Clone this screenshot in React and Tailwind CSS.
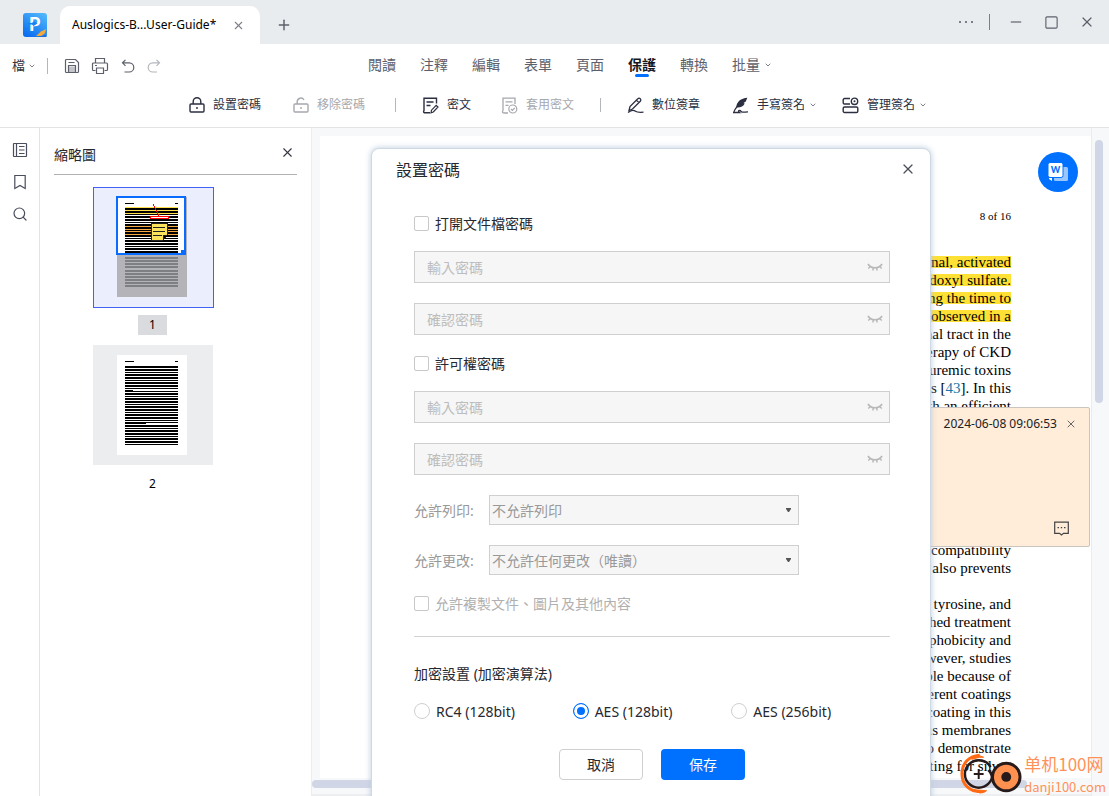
import React, { useState } from 'react'
import { ChevronDown, Minus, Plus, Search, Square, X } from 'lucide-react'

const menuItems = ['閱讀', '注釋', '編輯', '表單', '頁面', '保護', '轉換', '批量']

const printOptions = ['不允許列印', '低解析度', '高解析度']
const changeOptions = ['不允許任何更改（唯讀）', '允許註釋', '允許填寫表單']
const algorithms = ['RC4 (128bit)', 'AES (128bit)', 'AES (256bit)']

// one entry per line of the page; blank strings keep the rhythm
const paperLines = [
  { text: 'intestinal, activated', mark: true },
  { text: 'as indoxyl sulfate.', mark: true },
  { text: 'during the time to', mark: true },
  { text: 'was observed in a', mark: true },
  { text: 'intestinal tract in the' },
  { text: 'therapy of CKD' },
  { text: 'uremic toxins' },
  { text: 'toxins [43]. In this', cite: '43' },
  { text: 'with an efficient' },
  { text: '' },
  { text: '' },
  { text: '' },
  { text: '' },
  { text: '' },
  { text: '' },
  { text: '' },
  { text: 'biocompatibility' },
  { text: 'also prevents' },
  { text: '' },
  { text: 'tyrosine, and' },
  { text: 'established treatment' },
  { text: 'hydrophobicity and' },
  { text: 'However, studies' },
  { text: 'possible because of' },
  { text: 'different coatings' },
  { text: 'coating in this' },
  { text: 'dialysis membranes' },
  { text: 'to demonstrate' },
  { text: 'coating for silver' },
]

const Icon = ({ size = 16, children, className = '' }) => (
  <svg
    width={size}
    height={size}
    viewBox={`0 0 ${size} ${size}`}
    fill="none"
    stroke="currentColor"
    strokeWidth="1.2"
    className={`shrink-0 ${className}`}
    aria-hidden="true"
  >
    {children}
  </svg>
)

const SaveIcon = () => (
  <Icon size={16}>
    <path d="M5 8.500 H11 V14 H5 Z" fill="#c3c5cb" stroke="none" />
    <path d="M1.500 2.500 A1 1 0 0 1 2.500 1.500 H11.500 L14.500 4.500 V13.500 A1 1 0 0 1 13.500 14.500 H2.500 A1 1 0 0 1 1.500 13.500 Z" />
    <path d="M4.500 4.500 H10.500 M4.500 14.500 V7.500 H11.500 V14.500" />
  </Icon>
)

const PrintIcon = () => (
  <Icon size={18}>
    <path d="M4.500 6 V1.500 H13.500 V6 M4.500 13.500 H2.500 A1 1 0 0 1 1.500 12.500 V7 A1 1 0 0 1 2.500 6 H15.500 A1 1 0 0 1 16.500 7 V12.500 A1 1 0 0 1 15.500 13.500 H13.500" />
    <path d="M5.500 11 H12.500 V16.500 H5.500 Z M4 8.500 H6" />
  </Icon>
)

const UndoIcon = () => (
  <Icon size={14}>
    <path d="M4.500 0.800 L1.500 3.800 L4.500 6.800 M1.500 3.800 H8.200 A4.600 4.600 0 0 1 8.200 13 H3.500" />
  </Icon>
)

const RedoIcon = () => (
  <Icon size={14}>
    <path d="M9.500 0.800 L12.500 3.800 L9.500 6.800 M12.500 3.800 H5.800 A4.600 4.600 0 0 0 5.800 13 H10" />
  </Icon>
)

const LockIcon = ({ open }) => (
  <Icon size={16}>
    <rect x="1" y="7" width="14" height="8" rx="1" strokeWidth="1.400" />
    <path d={open ? 'M4.200 7 V4.500 A3.700 3.700 0 0 1 11 2.800' : 'M4.200 7 V4.500 A3.800 3.800 0 0 1 11.800 4.500 V7'} strokeWidth="1.400" />
    <path d="M8 10 V12" strokeWidth="1.400" />
  </Icon>
)

const RedactIcon = () => (
  <Icon size={17}>
    <path d="M8 15.800 H3.500 C1.800 15.800 1 15 2 13.500 V1.200 H14.500 V6.500" strokeWidth="1.400" />
    <path d="M4.500 5 H11.500 M4.500 8.500 H8.500" strokeWidth="1.300" />
    <path d="M9 15.800 L9.500 13.200 L14.200 8.300 L16 10 L11.300 15 Z" strokeWidth="1.200" />
  </Icon>
)

const ApplyIcon = () => (
  <Icon size={17}>
    <path d="M7 16 H3 C1.500 16 1 15 2 13.500 V1.200 H14 V7" strokeWidth="1.300" />
    <path d="M4.500 4.800 H11.500 M4.500 8.300 H7.500" />
    <circle cx="11.800" cy="12" r="4" />
    <path d="M10 12 L11.400 13.400 L13.800 10.800" />
  </Icon>
)

const PenIcon = () => (
  <Icon size={17}>
    <path d="M2 13.500 L3 9.500 L10.800 1.800 A1.300 1.300 0 0 1 13.300 4.200 L5.500 12 Z M9.500 3.200 L12 5.600" strokeWidth="1.300" />
    <path d="M1 15.500 C5 12.500 7 13 8.500 14.300 S12 15.500 16.500 15.200" strokeWidth="1.300" />
  </Icon>
)

const FeatherIcon = () => (
  <Icon size={17}>
    <path d="M15.300 0.800 C9 1.500 4.500 4.500 4.300 10.500 C8.500 10.800 11.500 9.500 12.700 6.500 L11.500 6 L13.800 4.500 Z" fill="currentColor" stroke="none" />
    <path d="M2 15 C2.500 12.500 4 10.500 8 6.500" strokeWidth="1.200" />
    <path d="M1 15.500 H7.500 C5 13.800 8 12.800 9 14.300 C10 15.800 12 15.400 16 14.800" strokeWidth="1.300" />
  </Icon>
)

const ManageIcon = () => (
  <Icon size={17}>
    <path d="M8 1.500 H2.500 A1.300 1.300 0 0 0 1.200 2.800 V5.700 A1.300 1.300 0 0 0 2.500 7 H8" strokeWidth="1.400" />
    <rect x="1.200" y="10" width="14.600" height="5.500" rx="1.300" strokeWidth="1.400" />
    <circle cx="12.500" cy="4.300" r="3.200" strokeWidth="1.400" />
    <circle cx="12.500" cy="4.300" r="1" fill="currentColor" stroke="none" />
  </Icon>
)

const ClosedEyeIcon = () => (
  <Icon size={16} className="text-[#b8b8b8]">
    <path d="M1 5 C4 10 12 10 15 5" strokeWidth="1.700" />
    <path d="M3.500 7.500 L1.200 9.500 M6.500 8.800 L5.800 11.500 M9.500 8.800 L10.200 11.500 M12.500 7.500 L14.800 9.500" strokeWidth="1.400" />
  </Icon>
)

const AppLogo = () => (
  <svg width="24" height="24" viewBox="0 0 24 24" className="shrink-0" aria-hidden="true">
    <defs>
      <linearGradient id="logoFill" x1="0.8" y1="0" x2="0.2" y2="1">
        <stop offset="0" stopColor="#4fb6fb" />
        <stop offset="1" stopColor="#0a6cf0" />
      </linearGradient>
    </defs>
    <rect width="24" height="24" rx="3" fill="url(#logoFill)" />
    <text x="6" y="18" fontSize="18" fontWeight="900" fill="#fff" fontFamily="Lato, sans-serif">P</text>
    <path d="M5 10 H9 L10.500 8.500 L14.500 10.500 L10.500 13 L9 11.500 H5 Z" fill="#1583f5" />
    <path d="M13 23 L18 18.500 L23 16 L22 20 L18 23.500 Z" fill="#f7a83b" />
    <path d="M14.500 23.500 L23.500 22 V24 H14 Z" fill="#1b6fd6" />
  </svg>
)

// text rows of a thumbnail: two thick, one thin, every 8px
const thumbRows = (count) =>
  Array.from({ length: count }, (_, i) => {
    const y = 11 + i * 8
    return (
      <g key={i}>
        <rect x="8" y={y} width="53" height="2" />
        <rect x="8" y={y + 3} width="53" height="2" />
        <rect x="8" y={y + 6} width="53" height="1" />
      </g>
    )
  })

const FirstThumb = () => (
  <svg width="72" height="102" viewBox="0 0 72 102" shapeRendering="crispEdges" aria-hidden="true">
    <rect x="1" y="1" width="70" height="100" fill="#b3b3b8" />
    <rect x="1" y="1" width="68" height="57" fill="#fff" />
    <g transform="translate(1 1)">
      <rect x="8" y="6" width="9" height="1" />
      <rect x="58" y="6" width="3" height="1" />
      <rect x="8" y="10" width="53" height="7" fill="#ffe04a" />
      <rect x="8" y="29" width="53" height="9" fill="#f5a944" />
      <g fill="#000">{thumbRows(6)}</g>
      <g fill="#7d7f83">
        {[60, 63, 66, 69, 73, 76, 79, 82, 85, 88].map((y) => (
          <rect key={y} x="8" y={y} width="53" height="2" />
        ))}
      </g>
    </g>
    <path d="M37 8 L43 20" stroke="#f00" strokeWidth="1" />
    <rect x="34.500" y="20.500" width="18" height="2" fill="#fff" stroke="#f00" />
    <path d="M35 27 H51 V39 L47 44 H35 Z" fill="#fbe45c" stroke="#222" />
    <path d="M37 31 H49 M37 35 H49 M37 39 H46 M47 44 V39 H51" stroke="#222" />
    <rect x="1" y="1" width="68" height="57" fill="none" stroke="#0a6cff" strokeWidth="2" />
    <rect x="65" y="54" width="5" height="5" fill="#0a6cff" />
  </svg>
)

const SecondThumb = () => (
  <svg width="70" height="100" viewBox="0 0 70 100" shapeRendering="crispEdges" aria-hidden="true">
    <rect width="70" height="100" fill="#fff" />
    <rect x="8" y="6" width="9" height="1" />
    <rect x="58" y="6" width="3" height="1" />
    {thumbRows(10)}
    <rect x="16" y="35" width="45" height="1" fill="#fff" />
    <rect x="29" y="68" width="32" height="1" fill="#fff" />
  </svg>
)

const TitleBar = () => (
  <header className="flex h-11 shrink-0 items-end bg-[#e8ecef] pl-[23px] text-[#5d606b]">
    <div className="flex h-[38px] items-center">
      <AppLogo />
    </div>
    <div className="ml-[13px] flex h-[38px] w-[200px] items-center justify-between rounded-t-[10px] bg-white pr-[15px] pl-3">
      <span className="text-[12px] text-black">Auslogics-B...User-Guide*</span>
      <button aria-label="關閉分頁" className="text-[#7c7f88]">
        <X size={13} strokeWidth={2} />
      </button>
    </div>
    <button aria-label="新分頁" className="ml-4 flex h-[38px] items-center">
      <Plus size={16} strokeWidth={2.2} />
    </button>
    <div className="ml-auto flex h-11 items-center pr-[14px]">
      <button aria-label="更多" className="flex w-[14px] justify-between">
        <span className="size-[2px] bg-[#7c7f88]" />
        <span className="size-[2px] bg-[#7c7f88]" />
        <span className="size-[2px] bg-[#7c7f88]" />
      </button>
      <span className="mx-4 h-4 w-px bg-[#7c7f88]" />
      <button aria-label="最小化" className="ml-[2px] text-[#7c7f88]">
        <Minus size={16} strokeWidth={2.2} />
      </button>
      <button aria-label="最大化" className="ml-5">
        <Square size={15} strokeWidth={1.8} />
      </button>
      <button aria-label="關閉" className="ml-5">
        <X size={16} strokeWidth={1.8} />
      </button>
    </div>
  </header>
)

const MenuBar = () => (
  <div className="flex h-11 items-center text-[#5d606b]">
    <div className="flex w-[368px] shrink-0 items-center pl-3">
      <button className="flex items-center gap-[3px] text-[13px] text-[#33363f]">
        檔
        <ChevronDown size={8} strokeWidth={2.4} className="text-[#5d606b]" />
      </button>
      <span className="mr-4 ml-[11px] h-4 w-px bg-[#b4b6bd]" />
      <div className="flex items-center gap-3">
        <button aria-label="儲存"><SaveIcon /></button>
        <button aria-label="列印" className="-ml-px"><PrintIcon /></button>
        <button aria-label="復原"><UndoIcon /></button>
        <button aria-label="重做" className="text-[#b4b6bd]"><RedoIcon /></button>
      </div>
    </div>
    <nav className="flex items-center gap-6 pb-[3px] text-[14px]">
      {menuItems.map((item) => {
        const active = item === '保護'
        return (
          <button key={item} className={`relative flex items-center gap-1 ${active ? 'font-bold text-[#14171f]' : ''}`}>
            {item}
            {item === '批量' && <ChevronDown size={8} strokeWidth={2.4} />}
            {active && <span className="absolute bottom-[-2px] left-[7px] h-[3px] w-[14px] rounded-full bg-[#0070ff]" />}
          </button>
        )
      })}
    </nav>
  </div>
)

const Tool = ({ icon, label, disabled, menu }) => (
  <button
    disabled={disabled}
    className={`flex items-center gap-2 ${disabled ? 'text-[#a6a8ae]' : 'text-[#2b2f40]'}`}
  >
    {icon}
    {label}
    {menu && <ChevronDown size={8} strokeWidth={2.4} className="ml-[-4px] text-[#5d606b]" />}
  </button>
)

const Toolbar = () => (
  <div className="flex h-[39px] items-center pb-[5px] pl-[189px] text-[12px]">
    <Tool icon={<LockIcon />} label="設置密碼" />
    <div className="ml-8"><Tool icon={<LockIcon open />} label="移除密碼" disabled /></div>
    <span className="mr-[26px] ml-[30px] h-[14px] w-px bg-[#b4b6bd]" />
    <Tool icon={<RedactIcon />} label="密文" />
    <div className="ml-[30px]"><Tool icon={<ApplyIcon />} label="套用密文" disabled /></div>
    <span className="mx-[26px] h-[14px] w-px bg-[#b4b6bd]" />
    <div className="flex items-center gap-8">
      <Tool icon={<PenIcon />} label="數位簽章" />
      <Tool icon={<FeatherIcon />} label="手寫簽名" menu />
    </div>
    <div className="ml-[25px]"><Tool icon={<ManageIcon />} label="管理簽名" menu /></div>
  </div>
)

const SideRail = () => (
  <aside className="flex w-10 shrink-0 flex-col items-center gap-4 border-r border-[#e3e3e6] pt-[14px] text-[#4a4e5c]">
    <button aria-label="縮略圖">
      <Icon size={16}>
        <rect x="1.500" y="1.500" width="13" height="13" rx="0.500" />
        <path d="M4.500 1.500 V14.500 M7 4.500 H12.500 M7 8 H12.500 M7 11.500 H12.500" />
      </Icon>
    </button>
    <button aria-label="書籤">
      <Icon size={16}>
        <path d="M2.800 1.500 H13.200 V14.500 L8 11.500 L2.800 14.500 Z" />
      </Icon>
    </button>
    <button aria-label="搜尋"><Search size={16} strokeWidth={1.8} /></button>
  </aside>
)

const ThumbnailPanel = () => (
  <section className="flex w-[272px] shrink-0 flex-col border-r border-[#ececee] pr-[14px] pl-[14px]">
    <div className="flex h-[47px] items-center justify-between border-b border-[#b0b0b0] pt-[7px]">
      <h2 className="text-[14px] text-[#26282f]">縮略圖</h2>
      <button aria-label="關閉縮略圖" className="mr-[2px] pb-1 text-[#33363f]">
        <X size={15} strokeWidth={1.8} />
      </button>
    </div>
    <div className="flex flex-col items-start pt-3 pl-[39px] text-[12px] text-black">
      <button className="flex size-[121px] border border-[#4361f5] bg-[#ebeefd] pt-2 pl-[22px]">
        <FirstThumb />
      </button>
      <span className="mt-[7px] ml-[45px] flex h-5 w-[29px] items-center justify-center bg-[#dadbdf]">1</span>
      <button className="mt-[10px] flex size-[120px] bg-[#ecedef] pt-[10px] pl-6">
        <SecondThumb />
      </button>
      <span className="mt-[9px] ml-[45px] flex h-5 w-[29px] items-center justify-center">2</span>
    </div>
  </section>
)

const PaperLine = ({ line }) => {
  if (line.cite) {
    const [before, after] = line.text.split(line.cite)
    return (
      <p className="h-[18px]">
        {before}
        <span className="text-[#1a76a8]">{line.cite}</span>
        {after}
      </p>
    )
  }
  return (
    <p className="h-[18px]">
      {line.mark ? <mark className="inline-block h-3 bg-[#ffe034] leading-3 text-inherit">{line.text}</mark> : line.text}
    </p>
  )
}

const Note = () => (
  <div className="absolute top-[279px] right-[19px] flex h-[140px] w-[170px] flex-col justify-between rounded-[2px] border border-[#c9c5be] bg-[#ffecd9] pt-[7px] pr-3 pb-[10px]">
    <div className="flex items-center justify-end gap-2 text-[12px] text-[#222]">
      <span>2024-06-08 09:06:53</span>
      <button aria-label="關閉註釋" className="text-[#666]">
        <X size={12} strokeWidth={2} />
      </button>
    </div>
    <button aria-label="回覆" className="mr-2 self-end text-[#444]">
      <Icon size={15}>
        <path d="M0.700 1.200 H14.300 V12.300 H9.500 L7.500 14 L5.500 12.300 H0.700 Z" />
        <path d="M3.500 6.700 H5 M6.800 6.700 H8.200 M10 6.700 H11.500" />
      </Icon>
    </button>
  </div>
)

const DocumentArea = () => (
  <section className="flex min-w-0 flex-1 bg-[#f7f8fa]">
    <div className="flex min-w-0 flex-1 flex-col pt-2">
      <article className="ml-2 min-h-0 flex-1 overflow-hidden bg-white pt-[71px] pr-20 text-right font-['Palatino_Linotype','Liberation_Serif',serif] text-[15px] leading-[18px] whitespace-nowrap text-black">
        <p className="mb-7 text-[11px]">8 of 16</p>
        {paperLines.map((line, i) => (
          <PaperLine key={i} line={line} />
        ))}
      </article>
      <div className="mt-[2px] mr-16 h-2 rounded-full bg-[#d1d6e6]" />
      <div className="mt-[6px] h-[2px] bg-[#eceef0]" />
    </div>
    <div className="w-[18px] shrink-0 border-l border-[#ececee] pt-3 pl-[3px]">
      <div className="h-[263px] w-2 rounded-full bg-[#d1d6e6]" />
    </div>
  </section>
)

const PasswordField = ({ placeholder }) => (
  <div className="flex h-8 items-center border border-[#cfcfcf] bg-[#f6f6f6] pr-[6px] pl-3">
    <input
      type="password"
      disabled
      aria-label={placeholder}
      placeholder={placeholder}
      className="min-w-0 flex-1 bg-transparent text-[14px] placeholder:text-[#bdbdbd]"
    />
    <button type="button" disabled aria-label="顯示密碼"><ClosedEyeIcon /></button>
  </div>
)

const CheckRow = ({ label, disabled }) => (
  <label className={`flex h-5 items-center gap-[6px] text-[14px] ${disabled ? 'text-[#b0b0b0]' : 'text-[#26282f]'}`}>
    <input
      type="checkbox"
      disabled={disabled}
      className="size-[15px] appearance-none rounded-[2px] border border-[#c8c8c8] bg-white checked:bg-[#0070ff]"
    />
    {label}
  </label>
)

const SelectRow = ({ id, label, options }) => (
  <div className="mt-5 flex h-[30px] items-center text-[14px] text-[#999]">
    <label htmlFor={id} className="w-[75px] shrink-0">{label}</label>
    <div className="relative w-[310px]">
      <select
        id={id}
        disabled
        className="block h-[30px] w-full appearance-none border border-[#cfcfcf] bg-[#f6f6f6] pl-[2px] text-[#999] opacity-100"
      >
        {options.map((o) => <option key={o}>{o}</option>)}
      </select>
      <svg width="5" height="4" viewBox="0 0 5 4" className="absolute top-[13px] right-2" aria-hidden="true">
        <path d="M0 0 H5 V1 L3 4 H2 L0 1 Z" fill="#555" />
      </svg>
    </div>
  </div>
)

const PasswordDialog = () => {
  const [algorithm, setAlgorithm] = useState('AES (128bit)')

  return (
    <form
      role="dialog"
      aria-label="設置密碼"
      className="absolute top-[20px] left-[371px] w-[560px] rounded-t-[8px] border border-[#cfd9e4] bg-white pb-10 text-[#26282f] shadow-[0_0_6px_#b9cbdc]"
    >
      <div className="flex h-[42px] items-center justify-between pr-[14px] pl-6">
        <h1 className="text-[16px]">設置密碼</h1>
        <button type="button" aria-label="關閉" className="pb-[3px] text-[#4a4e59]">
          <X size={16} strokeWidth={1.8} />
        </button>
      </div>

      <div className="mt-[22px] pr-10 pl-[42px]">
        <CheckRow label="打開文件檔密碼" />
        <div className="my-[18px] flex flex-col gap-5">
          <PasswordField placeholder="輸入密碼" />
          <PasswordField placeholder="確認密碼" />
        </div>

        <CheckRow label="許可權密碼" />
        <div className="my-[18px] flex flex-col gap-5">
          <PasswordField placeholder="輸入密碼" />
          <PasswordField placeholder="確認密碼" />
        </div>
        <SelectRow id="allow-print" label="允許列印:" options={printOptions} />
        <SelectRow id="allow-change" label="允許更改:" options={changeOptions} />
        <div className="mt-[18px]">
          <CheckRow label="允許複製文件、圖片及其他內容" disabled />
        </div>

        <hr className="mt-[23px] border-[#d2d2d2]" />

        <fieldset className="mt-[27px]">
          <legend className="h-5 text-[14px] leading-5">加密設置 (加密演算法)</legend>
          <div className="mt-[17px] grid grid-cols-3">
            {algorithms.map((name) => (
              <label key={name} className="flex h-5 items-center gap-[6px] text-[14px]">
                <input
                  type="radio"
                  name="algorithm"
                  checked={algorithm === name}
                  onChange={() => setAlgorithm(name)}
                  className="size-4 appearance-none rounded-full border border-[#cfcfcf] bg-white checked:border-[#0070ff] checked:bg-[#0070ff] checked:shadow-[inset_0_0_0_3px_#fff]"
                />
                {name}
              </label>
            ))}
          </div>
        </fieldset>

        <div className="mt-7 flex gap-[18px] pl-[145px] text-[14px]">
          <button type="button" className="h-[31px] w-[84px] rounded-[4px] border border-[#cfcfcf]">取消</button>
          <button type="button" className="h-[31px] w-[84px] rounded-[4px] bg-[#0070ff] text-white">保存</button>
        </div>
      </div>
    </form>
  )
}

const Watermark = () => (
  <div className="absolute right-[3px] bottom-0 flex items-end gap-[2px] text-[#ff9259]">
    <svg width="62" height="44" viewBox="0 0 63 44" aria-hidden="true">
      <path d="M20 3 C8 4 2 12 2 22 C2 33 10 40 21 40" fill="none" stroke="#ff6a13" strokeWidth="3" />
      <path d="M12 7 Q17 1 24 5 L20 5 Z M14 38 Q21 44 27 39 Z" fill="#ff6a13" stroke="#ff6a13" strokeWidth="1" />
      <circle cx="19" cy="22" r="14" fill="none" stroke="#261a1a" strokeWidth="2.500" strokeDasharray="80 8" />
      <path d="M19 17 V27 M14 22 H24" stroke="#261a1a" strokeWidth="2" />
      <circle cx="47" cy="25" r="14" fill="#ff9150" stroke="#261a1a" strokeWidth="3" />
      <circle cx="47" cy="25" r="5" fill="#261a1a" />
      <path d="M29 18 Q33 22 33 28" fill="none" stroke="#261a1a" strokeWidth="3" />
    </svg>
    <div className="font-['Noto_Sans_CJK_SC',sans-serif]">
      <div className="text-[17px] leading-[26px]">单机100网</div>
      <div className="text-[13px] leading-[19px]">danji100.com</div>
    </div>
  </div>
)

const App = () => {
  return (
    <div className="flex h-screen flex-col overflow-hidden bg-white font-['Noto_Sans','Noto_Sans_CJK_TC',sans-serif]">
      <TitleBar />
      <div className="shrink-0 border-b border-[#e3e3e6]">
        <MenuBar />
        <Toolbar />
      </div>
      <main className="relative flex min-h-0 flex-1">
        <SideRail />
        <ThumbnailPanel />
        <DocumentArea />
        <Note />
        <button aria-label="轉換為 Word" className="absolute top-6 right-[31px] flex size-10 items-center justify-center rounded-full bg-[#0070ff]">
          <svg width="20" height="20" viewBox="0 0 20 20" aria-hidden="true">
            <rect x="6" y="5" width="14" height="14" rx="1.500" fill="#99c6ff" />
            <rect x="0" y="0.500" width="15" height="15" rx="2" fill="#fff" stroke="#0070ff" strokeWidth="1" />
            <text x="7.500" y="11" textAnchor="middle" fontSize="9" fontWeight="900" fill="#0070ff" fontFamily="Lato, sans-serif">W</text>
            <path d="M1 16 H4 V19 L1 17 Z" fill="#fff" />
          </svg>
        </button>
        <PasswordDialog />
        <Watermark />
      </main>
    </div>
  )
}

export default App
